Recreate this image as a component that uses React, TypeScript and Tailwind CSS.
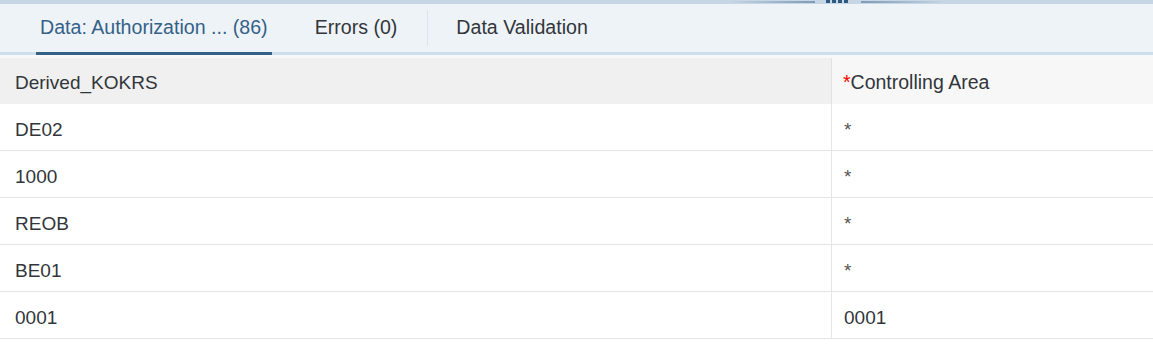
const rows = [
  { key: "DE02", area: "*" },
  { key: "1000", area: "*" },
  { key: "REOB", area: "*" },
  { key: "BE01", area: "*" },
  { key: "0001", area: "0001" },
]

export default function App() {
  return (
    <div className="w-[1153px] h-[346px] bg-white text-[#32363a] font-['Liberation_Sans',Arial,sans-serif] overflow-hidden">
      {/* splitter bar */}
      <div className="relative h-[4px] bg-[#c6d6e4]">
        <div className="absolute left-[730px] top-[1px] h-[2px] w-[85px] bg-gradient-to-r from-[#c6d6e4] to-[#7d9bb8]" />
        <div className="absolute left-[826px] top-0 flex gap-[2px]">
          <span className="w-[4px] h-[3px] bg-[#2f5a80]" />
          <span className="w-[4px] h-[3px] bg-[#2f5a80]" />
          <span className="w-[4px] h-[3px] bg-[#2f5a80]" />
          <span className="w-[4px] h-[3px] bg-[#2f5a80]" />
        </div>
        <div className="absolute left-[861px] top-[1px] h-[2px] w-[85px] bg-gradient-to-r from-[#7d9bb8] to-[#c6d6e4]" />
      </div>

      {/* tabs */}
      <div className="flex h-[51px] bg-[#eef3f8] border-b-[3px] border-[#cfdeeb] text-[19.6px]">
        <div className="ml-[36px] px-[4px] flex items-center text-[#346187] border-b-[3px] border-[#346187] -mb-[3px]">
          Data: Authorization ... (86)
        </div>
        <div className="ml-[43px] flex items-center">Errors (0)</div>
        <div className="ml-[30px] my-[6px] w-px bg-[#dbe4ec]" />
        <div className="ml-[28px] flex items-center">Data Validation</div>
      </div>

      <div className="h-[3px] bg-[#f7f8f9]" />

      {/* table */}
      <div className="grid grid-cols-[831px_1fr] text-[19px]">
        <div className="h-[46px] bg-[#f0f0f0] flex items-center pl-[15px] pt-[4px]">Derived_KOKRS</div>
        <div className="h-[46px] bg-[#f7f7f7] border-l border-[#e0e0e0] flex items-center pl-[11px] pt-[4px] text-[19.5px]">
          <span>
            <span className="text-[#e00]">*</span>Controlling Area
          </span>
        </div>
        {rows.map((r) => (
          <div key={r.key} className="contents">
            <div className="h-[47px] border-b border-[#e5e5e5] flex items-center pl-[15px] pt-[6px]">{r.key}</div>
            <div className="h-[47px] border-b border-l border-[#e5e5e5] flex items-center pl-[12px] pt-[6px]">
              <span className={r.area === "*" ? "text-[#555]" : ""}>{r.area}</span>
            </div>
          </div>
        ))}
      </div>
    </div>
  )
}
